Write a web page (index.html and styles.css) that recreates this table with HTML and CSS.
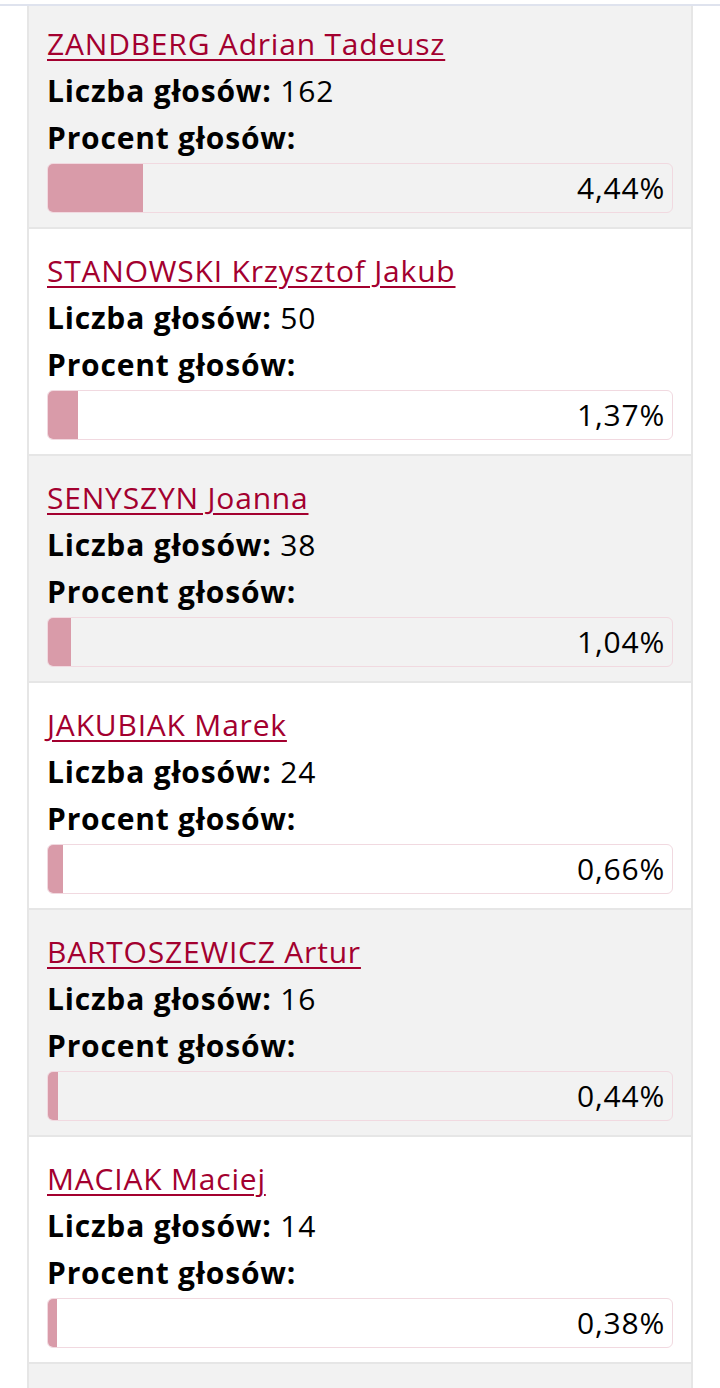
FILE: index.html
```html
<!DOCTYPE html>
<html lang="pl">
<head>
<meta charset="utf-8">
<link rel="stylesheet" href="styles.css">
</head>
<body>
<div class="topline"></div>
<div class="results">
  <div class="row gray first">
    <a class="name" href="#">ZANDBERG Adrian Tadeusz</a>
    <div class="line"><b>Liczba głosów:</b> 162</div>
    <div class="line"><b>Procent głosów:</b></div>
    <div class="bar"><div class="fill" style="width:15.2%"></div><span class="pct">4,44%</span></div>
  </div>
  <div class="row">
    <a class="name" href="#">STANOWSKI Krzysztof Jakub</a>
    <div class="line"><b>Liczba głosów:</b> 50</div>
    <div class="line"><b>Procent głosów:</b></div>
    <div class="bar"><div class="fill" style="width:4.8%"></div><span class="pct">1,37%</span></div>
  </div>
  <div class="row gray">
    <a class="name" href="#">SENYSZYN Joanna</a>
    <div class="line"><b>Liczba głosów:</b> 38</div>
    <div class="line"><b>Procent głosów:</b></div>
    <div class="bar"><div class="fill" style="width:3.7%"></div><span class="pct">1,04%</span></div>
  </div>
  <div class="row">
    <a class="name" href="#">JAKUBIAK Marek</a>
    <div class="line"><b>Liczba głosów:</b> 24</div>
    <div class="line"><b>Procent głosów:</b></div>
    <div class="bar"><div class="fill" style="width:2.4%"></div><span class="pct">0,66%</span></div>
  </div>
  <div class="row gray">
    <a class="name" href="#">BARTOSZEWICZ Artur</a>
    <div class="line"><b>Liczba głosów:</b> 16</div>
    <div class="line"><b>Procent głosów:</b></div>
    <div class="bar"><div class="fill" style="width:1.6%"></div><span class="pct">0,44%</span></div>
  </div>
  <div class="row">
    <a class="name" href="#">MACIAK Maciej</a>
    <div class="line"><b>Liczba głosów:</b> 14</div>
    <div class="line"><b>Procent głosów:</b></div>
    <div class="bar"><div class="fill" style="width:1.45%"></div><span class="pct">0,38%</span></div>
  </div>
  <div class="row gray"></div>
</div>
</body>
</html>
```
FILE: styles.css
```css
html, body {
  margin: 0;
  padding: 0;
  background: #fff;
}
body {
  font-family: "Open Sans", "Noto Sans", sans-serif;
  color: #000;
  height: 1388px;
  overflow: hidden;
}
.topline {
  margin-top: 4px;
  height: 2px;
  background: #dfe3ee;
}
.results {
  margin-left: 27px;
  width: 662px;
  border-left: 2px solid #e6e6e6;
  border-right: 2px solid #e6e6e6;
}
.row {
  background: #fff;
  padding: 18px 18px 14px 18px;
  border-bottom: 2px solid #e6e6e6;
  min-height: 193px;
}
.row.gray {
  background: #f2f2f2;
}
.row.first {
  padding-top: 14px;
}
.name {
  display: block;
  font-size: 30px;
  line-height: 47px;
  letter-spacing: 0.8px;
  color: #a3002f;
  text-decoration: underline;
  text-decoration-thickness: 2px;
  text-underline-offset: 4px;
  width: max-content;
}
.line {
  font-size: 30px;
  line-height: 47px;
  letter-spacing: 0.8px;
}
.line b {
  font-weight: 700;
}
.bar {
  position: relative;
  margin-top: 2px;
  height: 48px;
  border: 1px solid #f1d9e0;
  border-radius: 6px;
  overflow: hidden;
  display: flex;
  justify-content: flex-end;
  align-items: center;
}
.fill {
  position: absolute;
  left: 0;
  top: 0;
  bottom: 0;
  background: #d99ba9;
}
.pct {
  position: relative;
  font-size: 30px;
  line-height: 48px;
  letter-spacing: 0.8px;
  padding-right: 7px;
}
```
